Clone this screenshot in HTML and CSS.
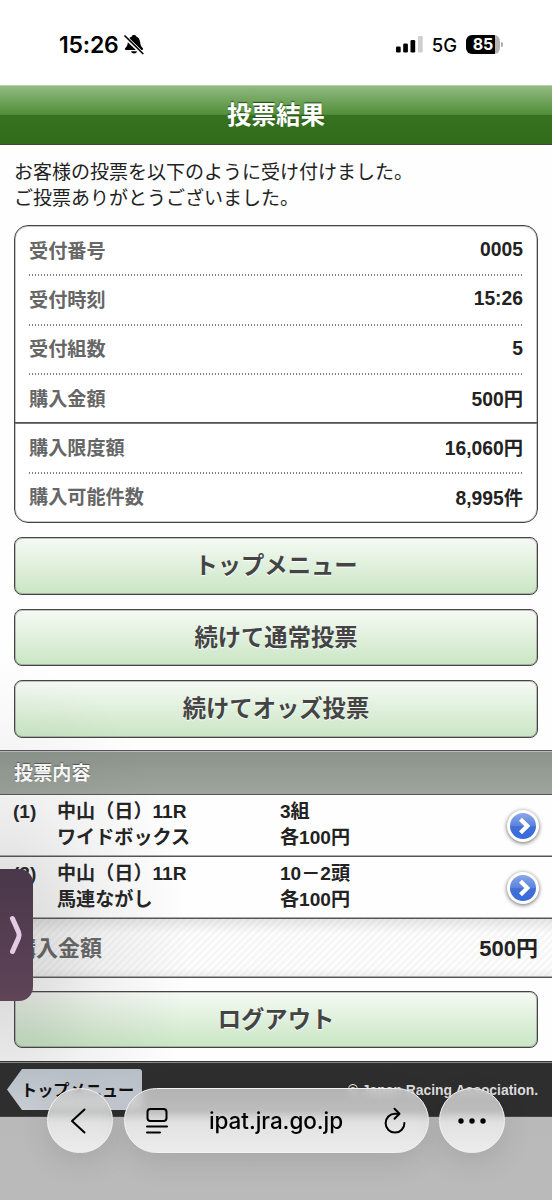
FILE: index.html
```html
<!DOCTYPE html>
<html lang="ja">
<head>
<meta charset="utf-8">
<title>投票結果</title>
<link rel="stylesheet" href="styles.css">
</head>
<body>
<div class="screen">
  <header class="status">
    <div class="clock"><span class="time">15:26</span>
      <svg class="bell" width="20" height="21" viewBox="0 0 20 21"><path d="M2 16c-1.200 0-1.500-1.200-.7-2C3.200 12.200 3.600 10.500 3.900 8C4.300 4.800 5.800 3 7.800 2.400C8.200 .6 11.800 .6 12.200 2.400C14.200 3 15.700 4.800 16.100 8C16.400 10.500 16.800 12.200 18.700 14C19.500 14.800 19.200 16 18 16Z"/><path d="M7 17.200h6c-.6 3-5.400 3-6 0z"/><path d="M0 1.600L19 20.200" stroke="#fff" stroke-width="4"/><path d="M1 2L18.800 19.500" stroke="#000" stroke-width="1.700" stroke-linecap="round"/></svg>
    </div>
    <div class="indicators">
      <svg width="27" height="17" viewBox="0 0 27 17"><rect x="0" y="10.500" width="4.700" height="6" rx="1.300"/><rect x="7.200" y="7.500" width="4.700" height="9" rx="1.300"/><rect x="14.500" y="4" width="4.700" height="12.500" rx="1.300"/><rect x="22" y="0" width="4.700" height="16.500" rx="1.300" fill="#cfcfcf"/></svg>
      <span class="network">5G</span>
      <span class="battery">85</span><span class="battery-tip"></span>
    </div>
  </header>
  <h1 class="title">投票結果</h1>
  <main class="content">
    <p class="intro">お客様の投票を以下のように受け付けました。<br>ご投票ありがとうございました。</p>
    <dl class="card">
      <div class="item"><dt>受付番号</dt><dd>0005</dd></div>
      <div class="item"><dt>受付時刻</dt><dd>15:26</dd></div>
      <div class="item"><dt>受付組数</dt><dd>5</dd></div>
      <div class="item last"><dt>購入金額</dt><dd>500円</dd></div>
      <div class="item"><dt>購入限度額</dt><dd>16,060円</dd></div>
      <div class="item last"><dt>購入可能件数</dt><dd>8,995件</dd></div>
    </dl>
    <nav class="actions">
      <a class="button">トップメニュー</a>
      <a class="button">続けて通常投票</a>
      <a class="button">続けてオッズ投票</a>
    </nav>
    <h2 class="section">投票内容</h2>
    <div class="bet">
      <span>(1)</span><span>中山（日）11R<br>ワイドボックス</span><span>3組<br>各100円</span>
      <svg class="go" viewBox="0 0 36 36"><defs><linearGradient id="blue" x1="0" y1="0" x2="0" y2="1"><stop offset="0" stop-color="#90acea"/><stop offset=".5" stop-color="#5b82dc"/><stop offset=".52" stop-color="#426fd2"/><stop offset="1" stop-color="#356be2"/></linearGradient></defs><circle cx="18" cy="18" r="14.500" fill="url(#blue)" stroke="#fff" stroke-width="3"/><path d="M15.500 11.200L22.300 18L15.500 24.800" fill="none" stroke="#fff" stroke-width="4.200"/></svg>
    </div>
    <div class="bet">
      <span>(2)</span><span>中山（日）11R<br>馬連ながし</span><span>10－2頭<br>各100円</span>
      <svg class="go" viewBox="0 0 36 36"><circle cx="18" cy="18" r="14.500" fill="url(#blue)" stroke="#fff" stroke-width="3"/><path d="M15.500 11.200L22.300 18L15.500 24.800" fill="none" stroke="#fff" stroke-width="4.200"/></svg>
    </div>
    <div class="total"><span class="label">購入金額</span><span>500円</span></div>
    <div class="logout"><a class="button">ログアウト</a></div>
  </main>
  <footer class="footer">
    <a class="back-top">トップメニュー</a>
    <small>© Japan Racing Association.</small>
  </footer>

  <div class="drawer">
    <svg width="16" height="42" viewBox="0 0 16 42"><path d="M4.500 4.500L10.500 18Q11.800 21 10.500 24L4.500 37.500" fill="none" stroke="#e4cbe4" stroke-width="5" stroke-linecap="round" stroke-linejoin="round"/></svg>
  </div>
  <div class="browser">
    <div class="glass round"><svg width="18" height="28" viewBox="0 0 18 28"><path d="M15.500 2.500L3 14L15.500 25.500" /></svg></div>
    <div class="glass address">
      <svg width="24" height="28" viewBox="0 0 24 28"><rect x="2.500" y="2" width="19" height="12" rx="3"/><path d="M2 19.500H22M2 25.500H15"/></svg>
      <span class="url">ipat.jra.go.jp</span>
      <svg width="24" height="28" viewBox="0 0 24 28"><path d="M16 6.800H12A9.400 9.400 0 1 0 21.400 16"/><path d="M11.500 1.800L16.500 6.800L11.500 11.800"/></svg>
    </div>
    <div class="glass round"><svg width="30" height="8" viewBox="0 0 30 8"><g class="dots"><circle cx="4" cy="4" r="2.700"/><circle cx="15" cy="4" r="2.700"/><circle cx="26" cy="4" r="2.700"/></g></svg></div>
  </div>
</div>
</body>
</html>
```
FILE: styles.css
```css
* { box-sizing: border-box; }
body { margin: 0; background: #fff; }
.screen {
  position: relative;
  width: 552px;
  height: 1200px;
  overflow: hidden;
  display: flex;
  flex-direction: column;
  background: linear-gradient(#bdbdbd, #b4b4b4 60%, #bababa);
  color: #222;
  font-family: "Liberation Sans", "Noto Sans CJK JP", sans-serif;
  font-size: 19px;
}
.status {
  flex: none;
  height: 85px;
  padding: 4px 49px 0 59px;
  display: flex;
  align-items: center;
  justify-content: space-between;
  background: #fff;
  color: #000;
  font-family: Inter, sans-serif;
}
.clock { display: flex; align-items: center; gap: 5px; }
.time { font-size: 23px; font-weight: 600; letter-spacing: -0.200px; }
.indicators { display: flex; align-items: center; }
.network { margin-left: 9px; font-size: 18.500px; font-weight: 500; }
.battery {
  margin-left: 9px;
  width: 34px;
  height: 19px;
  border-radius: 6px;
  background: linear-gradient(90deg, #000 29px, #b5b5b5 29px);
  color: #fff;
  font-size: 16px;
  font-weight: 700;
  line-height: 19px;
  text-align: center;
}
.battery-tip { width: 2px; height: 5px; margin-left: 1px; border-radius: 0 2px 2px 0; background: #aaa; }
.title {
  flex: none;
  margin: 0;
  height: 60px;
  border-top: 1px solid #b9d2ae;
  border-bottom: 1px solid #3c4a38;
  background: linear-gradient(#92ba80, #528f3b 49%, #36721f 50%, #306b1a);
  color: #fff;
  font-size: 24.500px;
  line-height: 60px;
  text-align: center;
  text-shadow: 0 -1px 1px #234b14;
}
.content {
  position: relative;
  flex: none;
  height: 916px;
  background: #fefefe;
}
/* soft shade cast by the drawer over the page */
.content::after {
  content: "";
  position: absolute;
  inset: 0;
  background: radial-gradient(ellipse 190px 290px at 0 805px, rgba(60,60,60,.22), rgba(90,90,90,.08) 55%, transparent);
  pointer-events: none;
}
.intro { margin: 0; padding: 15px 14px 13px; height: 80px; font-size: 19px; line-height: 26px; }
.card {
  margin: 0 14px;
  height: 298px;
  border: 1px solid #444;
  border-radius: 14px;
  box-shadow: inset 0 0 0 1px rgba(68,68,68,.3);
  display: grid;
  grid-template-rows: repeat(6, 1fr);
  background-color: #fff;
  font-weight: 700;
}
.item {
  position: relative;
  padding: 0 14px;
  display: flex;
  align-items: center;
  justify-content: space-between;
}
.item::after {
  content: "";
  position: absolute;
  left: 14px;
  right: 14px;
  bottom: -1px;
  height: 2px;
  background: repeating-linear-gradient(90deg, rgba(60,60,60,.65) 0 1.500px, transparent 1.500px 3px);
}
.item.last::after { left: 0; right: 0; background: linear-gradient(#555 50%, #777 50%); }
.item.last:last-child::after { display: none; }
.item dt { color: #666; padding-bottom: 2px; font-size: 19.150px; }
.item dd { margin: 0; padding-bottom: 1px; font-size: 19.300px; }
.actions { padding: 14px 14px 12px; display: grid; gap: 14px; }
.button {
  height: 57.500px;
  border: 1px solid #444;
  border-radius: 8px;
  box-shadow: inset 0 0 0 1px rgba(68,68,68,.3);
  background: linear-gradient(#f6faf4, #c9e6c4);
  color: #444;
  font-size: 23.300px;
  font-weight: 700;
  line-height: 56px;
  text-align: center;
  text-shadow: 0 1px 1px #fff;
}
.section {
  margin: 0;
  height: 45px;
  padding: 0 14px;
  border-top: 1px solid #555;
  border-bottom: 1px solid #555;
  box-shadow: inset 0 1px #b8bdb8;
  background: linear-gradient(#8b938b, #9da59d);
  color: #fff;
  font-size: 19.150px;
  line-height: 45px;
  text-shadow: 0 -1px 1px #555;
}
.bet {
  height: 62px;
  padding: 4px 11px 0 13px;
  border-bottom: 1px solid #555;
  box-shadow: inset 0 -1px #aaa;
  display: grid;
  grid-template-columns: 44px 223px 1fr 36px;
  font-size: 19.100px;
  font-weight: 700;
  line-height: 26px;
}
.go { width: 36px; height: 36px; margin-top: 9px; filter: drop-shadow(0 1px 2px rgba(0,0,0,.6)); }
.total {
  height: 59px;
  padding: 0 14px 4px;
  border-bottom: 1px solid #555;
  box-shadow: inset 0 -1px #aaa;
  display: flex;
  align-items: center;
  justify-content: space-between;
  background:
    linear-gradient(rgba(0,0,0,.09), transparent 25%, transparent 85%, rgba(0,0,0,.05)),
    repeating-linear-gradient(135deg, rgba(0,0,0,.03) 0 2px, transparent 3px 4px, rgba(0,0,0,.03) 5px);
  font-size: 22px;
  font-weight: 700;
}
.label { color: #666; }
.logout { display: grid; padding: 13px 14px 12px; }
.footer {
  flex: none;
  height: 56px;
  padding: 0 14px 0 7px;
  border-top: 1px solid #333;
  box-shadow: inset 0 1px #888, inset 0 -1px #444;
  background: #2e2e2e;
  display: flex;
  align-items: center;
  justify-content: space-between;
  color: #ddd;
}
.back-top {
  width: 135px;
  height: 41px;
  padding-left: 14px;
  border-radius: 3px;
  clip-path: polygon(0 50%, 15px 0, 100% 0, 100% 100%, 15px 100%);
  background: linear-gradient(#b8bec6, #c8cdd4);
  color: #111;
  font-size: 16.200px;
  font-weight: 700;
  line-height: 43px;
}
.footer small { font-size: 13.900px; font-weight: 700; }
.drawer {
  position: absolute;
  left: 0;
  top: 869px;
  width: 33px;
  height: 132px;
  padding-left: 8px;
  border-radius: 0 14px 14px 0;
  background: linear-gradient(#49374a, #604458);
  display: flex;
  align-items: center;
}
.browser {
  position: absolute;
  left: 47px;
  top: 1088px;
  width: 458px;
  height: 65px;
  display: flex;
  justify-content: space-between;
  color: #000;
}
.glass {
  height: 65px;
  border: 1px solid #f2f2f2;
  border-radius: 33px;
  background: linear-gradient(rgba(205,205,205,.84), rgba(208,208,208,.88) 35%, #e2e2e2 55%, #ececec);
  box-shadow: 0 8px 30px rgba(0,0,0,.1);
  backdrop-filter: blur(4px);
  display: flex;
  align-items: center;
  justify-content: center;
}
.round { width: 66px; }
.round svg { margin-right: 4px; }
.round:last-child svg { margin-right: 0; }
.address { width: 305px; padding: 0 20px; justify-content: space-between; }
.url { font-family: Inter, sans-serif; font-size: 22.500px; font-weight: 500; letter-spacing: -0.050px; }
.glass svg { fill: none; stroke: #000; stroke-width: 2; stroke-linecap: round; stroke-linejoin: round; }
.glass .dots { fill: #000; stroke: none; }
```
